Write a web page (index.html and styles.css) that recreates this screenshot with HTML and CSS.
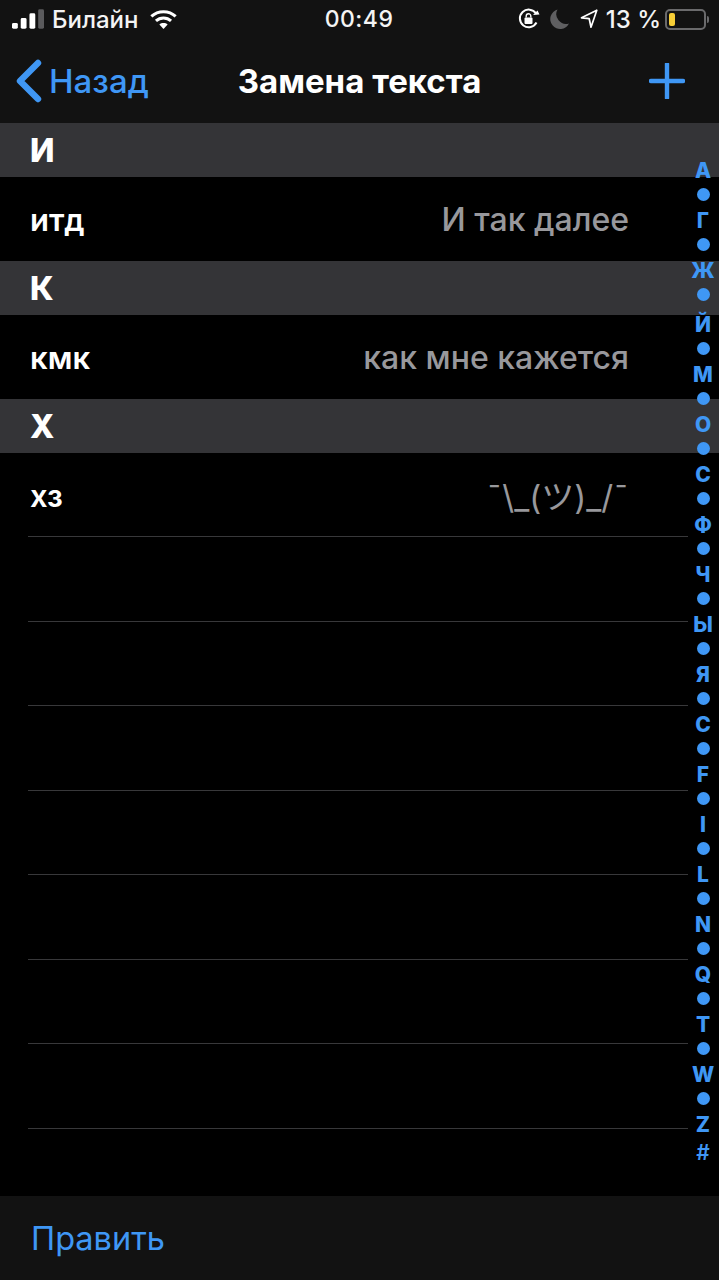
FILE: index.html
```html
<!DOCTYPE html>
<html lang="ru">
<head>
  <meta charset="UTF-8">
  <title>Замена текста</title>
  <meta name="viewport" content="width=device-width, initial-scale=1.0">
  <link rel="stylesheet" href="styles.css">
</head>
<body>

  <div class="screen">
    <header class="top">
      <div class="status">
        <div class="status-left">
          <svg class="signal" width="32" height="21" viewBox="0 0 33 21">
            <rect x="0" y="14" width="6" height="6" rx="1.5" fill="#fff"/>
            <rect x="9" y="9" width="6" height="11" rx="1.5" fill="#fff"/>
            <rect x="18" y="4" width="6" height="16" rx="1.5" fill="#fff"/>
            <rect x="27" y="0" width="6" height="20" rx="1.5" fill="#5a5a5c"/>
          </svg>
          <span>Билайн</span>
          <svg class="wifi" width="27" height="21" viewBox="0 0 30 22" fill="none" stroke="#fff" stroke-width="3.4">
            <path d="M1.500 7.600C9 .6 21 .6 28.500 7.600"/>
            <path d="M6.600 12.600C11.400 8.200 18.600 8.200 23.400 12.600"/>
            <path d="M15 21.500l-4.600-5c2.600-2.200 6.600-2.200 9.200 0z" fill="#fff" stroke="none"/>
          </svg>
        </div>
        <div class="status-time">00:49</div>
        <div class="status-right">
          <svg width="22" height="22" viewBox="0 0 22 22" fill="none">
            <path d="M18.500 14.500A8.800 8.800 0 1 1 18 5.500" stroke="#fff" stroke-width="2"/>
            <path d="M21.500 6.500l-6.500.5 4.500-4.500z" fill="#fff"/>
            <rect x="6.500" y="9.500" width="8" height="6.500" rx="1" fill="#fff"/>
            <path d="M8.200 9.500V8a2.300 2.300 0 0 1 4.600 0v1.500" stroke="#fff" stroke-width="1.400"/>
          </svg>
          <svg class="moon" width="20" height="22" viewBox="0 0 20 22">
            <path d="M7.500 1.500A9.800 9.800 0 0 0 19 15.500 9.900 9.900 0 1 1 7.500 1.500z" fill="#5f5f61"/>
          </svg>
          <svg class="arrow" width="18" height="20" viewBox="0 0 18 20" fill="none">
            <path d="M16.800 1.200L1.500 8.800l7.700.9 1.800 8.500z" stroke="#fff" stroke-width="1.700" stroke-linejoin="round"/>
          </svg>
          <span class="percent">13 %</span>
          <div class="battery">
            <div class="battery-body"><div class="battery-level"></div></div>
            <div class="battery-cap"></div>
          </div>
        </div>
      </div>
      <nav class="nav">
        <a class="nav-back">
          <svg width="28" height="44" viewBox="0 0 28 44" fill="none">
            <path d="M23 4L5 22l18 18" stroke="#3f97f5" stroke-width="6.400" stroke-linecap="round" stroke-linejoin="round"/>
          </svg>
          <span>Назад</span>
        </a>
        <h1 class="nav-title">Замена текста</h1>
        <svg class="nav-add" width="36" height="36" viewBox="0 0 36 36" fill="none">
          <path d="M18 1v34M2 18h32" stroke="#3f97f5" stroke-width="4.400" stroke-linecap="round"/>
        </svg>
      </nav>
    </header>

    <main class="list">
      <div class="section">И</div>
      <div class="row"><span class="row-key">итд</span><span class="row-value">И так далее</span></div>
      <div class="section">К</div>
      <div class="row"><span class="row-key">кмк</span><span class="row-value">как мне кажется</span></div>
      <div class="section">Х</div>
      <div class="row row-last"><span class="row-key">хз</span><span class="row-value row-shrug">¯\_(ツ)_/¯</span></div>
      <div class="empty"></div>
      <div class="empty"></div>
      <div class="empty"></div>
      <div class="empty"></div>
      <div class="empty"></div>
      <div class="empty"></div>
      <div class="empty"></div>
    </main>

    <aside class="index">
      <span>А</span><i></i><span>Г</span><i></i><span>Ж</span><i></i><span class="index-tall">Й</span><i></i><span>М</span><i></i>
      <span>О</span><i></i><span>С</span><i></i><span>Ф</span><i></i><span>Ч</span><i></i><span>Ы</span><i></i>
      <span>Я</span><i></i><span>C</span><i></i><span>F</span><i></i><span>I</span><i></i><span>L</span><i></i>
      <span>N</span><i></i><span>Q</span><i></i><span>T</span><i></i><span>W</span><i></i><span>Z</span>
      <span class="index-hash">#</span>
    </aside>

    <footer class="toolbar">Править</footer>
  </div>

</body>
</html>
```

FILE: styles.css
```css
* {
  box-sizing: border-box;
}

body {
  margin: 0;
  background: #000;
  font-family: Inter, 'Noto Sans CJK JP', sans-serif;
  color: #fff;
}

.screen {
  position: relative;
  width: 719px;
  height: 1280px;
  display: flex;
  flex-direction: column;
  overflow: hidden;
  background: #000;
}

.top {
  height: 123px;
  background: #121212;
  flex-shrink: 0;
}

.status {
  height: 38px;
  padding: 0 10px 0 12px;
  display: grid;
  grid-template-columns: 1fr auto 1fr;
  align-items: center;
  font-size: 24px;
  font-weight: 500;
  color: #f4f4f4;
}

.status-left {
  display: flex;
  align-items: center;
  gap: 8px;
}

.wifi {
  margin-left: 3px;
}

.status-time {
  font-size: 23px;
  letter-spacing: 0.5px;
  margin-left: -3px;
}

.status-right {
  display: flex;
  align-items: center;
  justify-content: flex-end;
  gap: 10px;
}

.percent {
  font-size: 24px;
  margin-left: -2px;
}

.battery {
  display: flex;
  align-items: center;
  gap: 1px;
  margin-left: -6px;
}

.battery-body {
  width: 41px;
  height: 21px;
  border: 2px solid #6a6a6c;
  border-radius: 5px;
  padding: 2px;
}

.battery-level {
  width: 6px;
  height: 100%;
  background: #f7ce37;
  border-radius: 2px;
}

.battery-cap {
  width: 2px;
  height: 7px;
  background: #6a6a6c;
  border-radius: 0 2px 2px 0;
}

.nav {
  position: relative;
  height: 85px;
  display: flex;
  align-items: center;
  justify-content: space-between;
  padding: 0 34px 0 15px;
}

.nav-back {
  display: flex;
  align-items: center;
  gap: 6px;
  font-size: 33px;
  font-weight: 500;
  color: #3f97f5;
}

.nav-title {
  position: absolute;
  left: 0;
  right: 0;
  margin: 0;
  text-align: center;
  font-size: 33px;
  font-weight: 700;
  color: #fff;
}

.section {
  height: 54px;
  padding: 1px 0 0 30px;
  display: flex;
  align-items: center;
  background: #343437;
  font-size: 32px;
  font-weight: 800;
}

.row {
  height: 84px;
  padding: 0 90px 0 30px;
  display: flex;
  align-items: center;
  justify-content: space-between;
}

.row-key {
  font-size: 31px;
  font-weight: 600;
}

.row-value {
  font-size: 32px;
  font-weight: 500;
  color: #98989c;
}

.row-shrug {
  font-size: 33px;
  font-weight: 400;
}

.row-last {
  position: relative;
}

.row-last::after {
  content: "";
  position: absolute;
  left: 28px;
  right: 31px;
  bottom: 0;
  height: 1px;
  background: #38383a;
}

.empty {
  height: 84.500px;
  margin: 0 31px 0 28px;
  border-bottom: 1px solid #38383a;
}

.list {
  flex: 1;
}

.index {
  position: absolute;
  top: 157px;
  right: 1px;
  width: 30px;
  display: flex;
  flex-direction: column;
  align-items: center;
  font-size: 21px;
  font-weight: 800;
  color: #3f97f5;
}

.index span {
  height: 25px;
  line-height: 27px;
}

.index i {
  width: 13px;
  height: 13px;
  margin: 6px;
  border-radius: 50%;
  background: #3f97f5;
}

.index .index-tall {
  margin-top: 4px;
}

.index .index-hash {
  margin-top: 3px;
  font-weight: 600;
}

.toolbar {
  height: 84px;
  flex-shrink: 0;
  padding: 0 31px;
  display: flex;
  align-items: center;
  background: #121212;
  font-size: 32.500px;
  color: #3f97f5;
}
```
